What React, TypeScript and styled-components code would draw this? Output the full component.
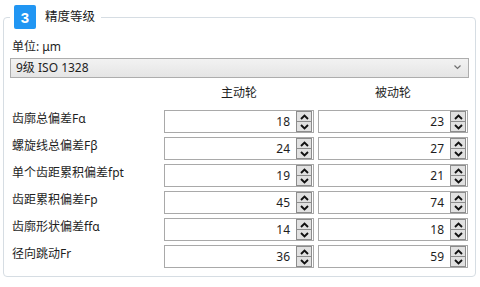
import React from 'react'
import styled, { createGlobalStyle } from 'styled-components'

const GlobalStyle = createGlobalStyle`
  html, body {
    margin: 0;
    padding: 0;
    background: #ffffff;
  }
  body {
    font-family: 'Noto Sans', 'Noto Sans CJK SC', sans-serif;
    font-size: 12px;
    color: #1e1e1e;
  }
`

interface Row {
  label: string
  driving: number
  driven: number
}

const rows: Row[] = [
  { label: '齿廓总偏差Fα', driving: 18, driven: 23 },
  { label: '螺旋线总偏差Fβ', driving: 24, driven: 27 },
  { label: '单个齿距累积偏差fpt', driving: 19, driven: 21 },
  { label: '齿距累积偏差Fp', driving: 45, driven: 74 },
  { label: '齿廓形状偏差ffα', driving: 14, driven: 18 },
  { label: '径向跳动Fr', driving: 36, driven: 59 },
]

const Arrow = ({ up }: { up?: boolean }) => (
  <svg width="9" height="6" viewBox="0 0 9 6">
    <path
      d={up ? 'M1 5 L4.5 1.5 L8 5' : 'M1 1 L4.5 4.5 L8 1'}
      fill="none"
      stroke="#111"
      strokeWidth="1.9"
    />
  </svg>
)

const SpinBox = ({ value }: { value: number }) => (
  <Box>
    <Value>{value}</Value>
    <Spinner>
      <SpinButton>
        <Arrow up />
      </SpinButton>
      <SpinButton>
        <Arrow />
      </SpinButton>
    </Spinner>
  </Box>
)

const App = () => {
  return (
    <>
      <GlobalStyle />
      <Page>
        <Panel>
          <Legend>
            <Badge>3</Badge>
            <Title>精度等级</Title>
          </Legend>

          <Unit>单位: μm</Unit>
          <Select>
            <span>9级 ISO 1328</span>
            <svg width="7" height="5" viewBox="0 0 7 5">
              <path d="M0.5 0.5 L3.5 3.5 L6.5 0.5" fill="none" stroke="#707070" strokeWidth="1.2" />
            </svg>
          </Select>

          <Grid>
            <span />
            <ColumnHead>主动轮</ColumnHead>
            <ColumnHead>被动轮</ColumnHead>
            {rows.map((row) => (
              <React.Fragment key={row.label}>
                <Label>{row.label}</Label>
                <SpinBox value={row.driving} />
                <SpinBox value={row.driven} />
              </React.Fragment>
            ))}
          </Grid>
        </Panel>
      </Page>
    </>
  )
}

const Page = styled.div`
  padding: 5px 4px 0 3px;
  width: 480px;
  box-sizing: border-box;
`

const Panel = styled.fieldset`
  margin: 0;
  padding: 0 6px 8px 6px;
  border: 1px solid #d6dde3;
  border-radius: 4px;
  min-width: 0;
`

const Legend = styled.legend`
  display: flex;
  align-items: center;
  padding: 0 6px 0 4px;
  margin: 0;
  height: 24px;
`

const Badge = styled.span`
  display: flex;
  align-items: center;
  justify-content: center;
  width: 22px;
  height: 24px;
  background: #2196f3;
  color: #fff;
  font-family: 'Liberation Sans', sans-serif;
  font-weight: bold;
  font-size: 15px;
  border-radius: 2px;
`

const Title = styled.span`
  margin-left: 9px;
  font-size: 12.5px;
  line-height: 16px;
  color: #1a1a1a;
`

const Unit = styled.div`
  margin-top: 11px;
  padding-left: 2px;
  line-height: 14px;
`

const Select = styled.div`
  margin-top: 4px;
  height: 20px;
  box-sizing: border-box;
  display: flex;
  align-items: center;
  justify-content: space-between;
  padding: 0 7px 0 5px;
  border: 1px solid #adadad;
  background: linear-gradient(#f2f2f2, #e5e5e5);
  line-height: 14px;

  svg {
    margin-bottom: 1px;
  }
`

const Grid = styled.div`
  display: grid;
  grid-template-columns: 150px 150px 150px;
  column-gap: 4px;
  row-gap: 4px;
  margin-top: 8px;
`

const ColumnHead = styled.div`
  text-align: center;
  line-height: 14px;
  margin-bottom: 6px;
`

const Label = styled.div`
  padding-left: 2px;
  line-height: 16px;
  padding-top: 1px;
`

const Box = styled.div`
  display: flex;
  align-items: stretch;
  height: 23px;
  box-sizing: border-box;
  border: 1px solid #a9a9a9;
  background: #fff;
`

const Value = styled.div`
  flex: 1;
  text-align: right;
  padding-right: 6px;
  line-height: 21px;
`

const Spinner = styled.div`
  display: flex;
  flex-direction: column;
  width: 16px;
  margin-right: 1px;
`

const SpinButton = styled.div`
  flex: 1;
  display: flex;
  align-items: center;
  justify-content: center;
  background: #e1e1e1;
  border: 1px solid #8c8c8c;

  & + & {
    border-top: none;
  }
`

export default App
